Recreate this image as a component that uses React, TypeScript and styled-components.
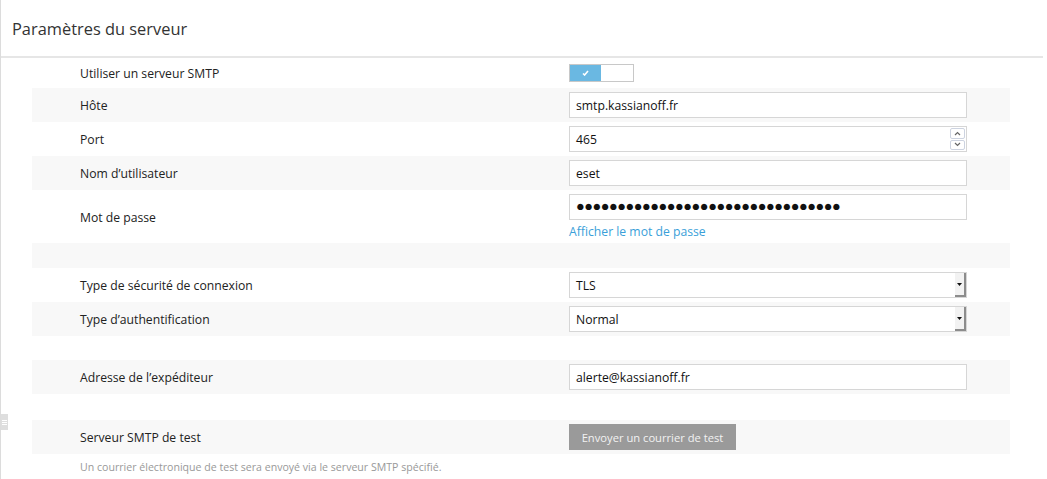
import styled, { createGlobalStyle } from "styled-components";

const GlobalStyle = createGlobalStyle`
  html, body {
    margin: 0;
    padding: 0;
    background: #fff;
  }
  body {
    font-family: "Open Sans", "Noto Sans", Arial, sans-serif;
    font-size: 12.2px;
    color: #222;
  }
`;

const Page = styled.div`
  position: relative;
  height: 479px;
  border-left: 1px solid #dcdcdc;
  overflow: hidden;
`;

const Header = styled.header`
  height: 56px;
  display: flex;
  align-items: center;
  padding-left: 11px;
  border-bottom: 2px solid #e6e6e6;
  margin-right: 4px;
`;

const Title = styled.h1`
  margin: 0;
  font-size: 16.4px;
  font-weight: 400;
  color: #333;
`;

const Form = styled.div`
  display: flex;
  flex-direction: column;
  padding: 0 37px 0 31px;
`;

const Row = styled.div<{ $striped?: boolean; $h?: number }>`
  display: grid;
  grid-template-columns: 537px 398px;
  align-items: center;
  height: ${(p) => p.$h ?? 34}px;
  background: ${(p) => (p.$striped ? "#f8f8f8" : "transparent")};
`;

const Label = styled.div`
  padding: 1px 0 0 48px;
  color: #222;
`;

const Control = styled.div`
  display: flex;
  flex-direction: column;
  gap: 4px;
`;

const Field = styled.div`
  position: relative;
  height: 26px;
  box-sizing: border-box;
  border: 1px solid #d6d6d6;
  background: #fff;
  display: flex;
  align-items: center;
  padding-left: 6px;
  color: #111;
`;

const Dots = styled.span`
  font-size: 14.5px;
  letter-spacing: -0.5px;
  line-height: 1;
`;

const Spinner = styled.div`
  position: absolute;
  right: 1px;
  top: 1px;
  bottom: 1px;
  width: 15px;
  display: flex;
  flex-direction: column;
  gap: 1px;
`;

const SpinButton = styled.div`
  flex: 1;
  border: 1px solid #cdd3e0;
  border-radius: 2px;
  background: #fff;
  display: flex;
  align-items: center;
  justify-content: center;
`;

const DropArrow = styled.div`
  position: absolute;
  right: 0;
  top: 0;
  bottom: 0;
  width: 11px;
  background: #f2f2f2;
  border-right: 2px solid #8c8c8c;
  border-bottom: 2px solid #8c8c8c;
  box-sizing: border-box;
  display: flex;
  align-items: center;
  justify-content: center;
`;

const Toggle = styled.div`
  width: 65px;
  height: 18px;
  box-sizing: border-box;
  border: 1px solid #c8c8c8;
  background: #fff;
  display: flex;
`;

const ToggleOn = styled.div`
  width: 31px;
  background: #6ab8e2;
  display: flex;
  align-items: center;
  justify-content: center;
`;

const LinkText = styled.a`
  color: #3a9fd9;
  text-decoration: none;
  line-height: 16px;
`;

const TestButton = styled.button`
  width: 167px;
  height: 26px;
  border: none;
  background: #9a9a9a;
  color: #f2f2f2;
  font-family: inherit;
  font-size: 11.2px;
  padding: 0;
`;

const Help = styled.div`
  padding: 6px 0 0 48px;
  font-size: 10.6px;
  color: #999;
`;

const Handle = styled.div`
  position: absolute;
  left: 0;
  top: 414px;
  width: 7px;
  height: 16px;
  background: #dedede;
  display: flex;
  flex-direction: column;
  justify-content: center;
  gap: 1px;
  padding: 0 1px;
  box-sizing: border-box;
  span {
    height: 1px;
    background: #fff;
  }
`;

const Chevron = ({ up }: { up?: boolean }) => (
  <svg width="7" height="5" viewBox="0 0 7 5">
    <path
      d={up ? "M1 4 L3.5 1.5 L6 4" : "M1 1 L3.5 3.5 L6 1"}
      fill="none"
      stroke="#666"
      strokeWidth="1.2"
    />
  </svg>
);

const Select = ({ value }: { value: string }) => (
  <Field>
    {value}
    <DropArrow>
      <svg width="5" height="3" viewBox="0 0 5 3">
        <path d="M0 0 H5 L2.5 3 Z" fill="#111" />
      </svg>
    </DropArrow>
  </Field>
);

export default function App() {
  return (
    <>
      <GlobalStyle />
      <Page>
        <Header>
          <Title>Paramètres du serveur</Title>
        </Header>
        <Form>
          <Row $h={30}>
            <Label>Utiliser un serveur SMTP</Label>
            <Toggle>
              <ToggleOn>
                <svg width="7" height="6" viewBox="0 0 7 6">
                  <path d="M1 3.5 L2.6 5 L6 1" fill="none" stroke="#fff" strokeWidth="1.6" />
                </svg>
              </ToggleOn>
            </Toggle>
          </Row>
          <Row $striped>
            <Label>Hôte</Label>
            <Field>smtp.kassianoff.fr</Field>
          </Row>
          <Row>
            <Label>Port</Label>
            <Field>
              465
              <Spinner>
                <SpinButton>
                  <Chevron up />
                </SpinButton>
                <SpinButton>
                  <Chevron />
                </SpinButton>
              </Spinner>
            </Field>
          </Row>
          <Row $striped>
            <Label>Nom d’utilisateur</Label>
            <Field>eset</Field>
          </Row>
          <Row $h={53}>
            <Label>Mot de passe</Label>
            <Control>
              <Field>
                <Dots>●●●●●●●●●●●●●●●●●●●●●●●●●●●●●●●●</Dots>
              </Field>
              <LinkText>Afficher le mot de passe</LinkText>
            </Control>
          </Row>
          <Row $striped $h={25} />
          <Row>
            <Label>Type de sécurité de connexion</Label>
            <Select value="TLS" />
          </Row>
          <Row $striped>
            <Label>Type d’authentification</Label>
            <Select value="Normal" />
          </Row>
          <Row $h={24} />
          <Row $striped>
            <Label>Adresse de l’expéditeur</Label>
            <Field>alerte@kassianoff.fr</Field>
          </Row>
          <Row $h={26} />
          <Row $striped>
            <Label>Serveur SMTP de test</Label>
            <div>
              <TestButton>Envoyer un courrier de test</TestButton>
            </div>
          </Row>
          <Help>Un courrier électronique de test sera envoyé via le serveur SMTP spécifié.</Help>
        </Form>
        <Handle>
          <span />
          <span />
          <span />
        </Handle>
      </Page>
    </>
  );
}
